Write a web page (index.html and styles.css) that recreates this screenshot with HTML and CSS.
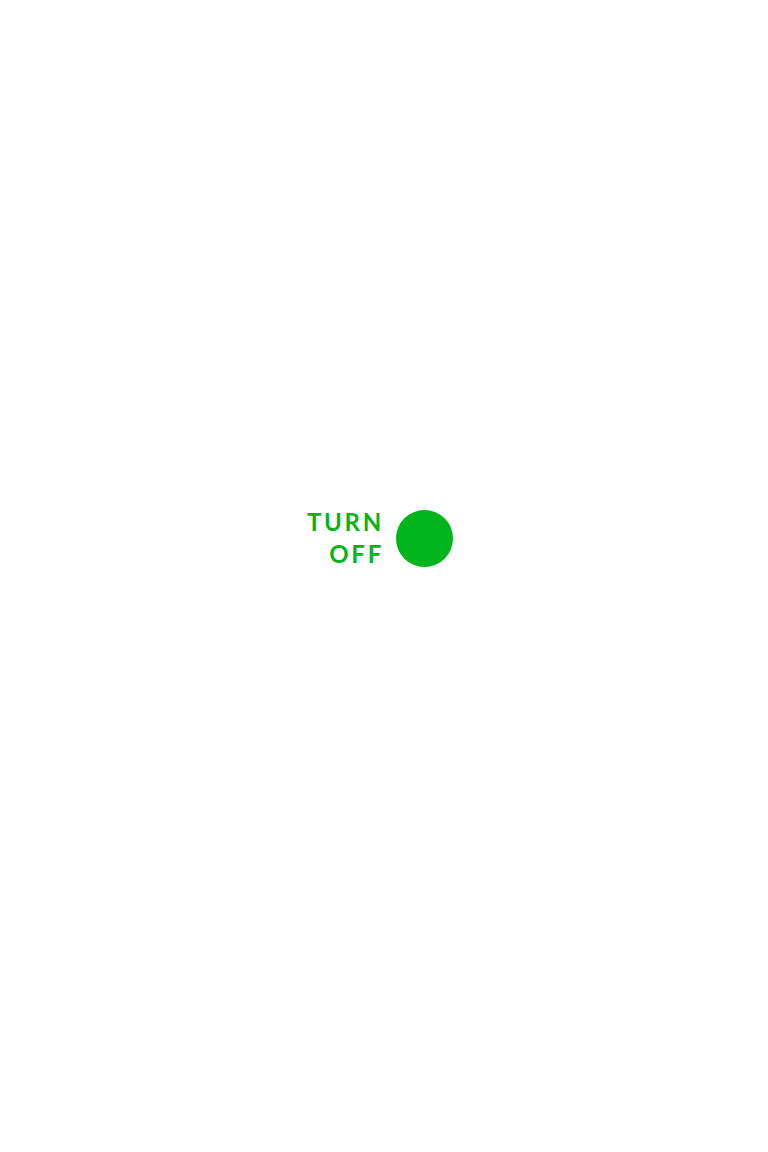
FILE: index.html
```html
<!DOCTYPE html>
<html>
<head>
<meta charset="utf-8">
<link rel="stylesheet" href="styles.css">
</head>
<body>
<div class="page">
  <button class="toggle">
    <span class="label">TURN<br>OFF</span>
    <span class="dot"></span>
  </button>
</div>
</body>
</html>
```
FILE: styles.css
```css
html, body {
  margin: 0;
  padding: 0;
  background: #ffffff;
}
.page {
  width: 768px;
  height: 1152px;
  box-sizing: border-box;
  padding-top: 506px;
  padding-left: 307px;
}
.toggle {
  display: flex;
  align-items: center;
  gap: 12px;
  background: none;
  border: none;
  padding: 0;
  margin: 0;
  cursor: pointer;
}
.label {
  font-family: Lato, "Open Sans", sans-serif;
  font-weight: 700;
  font-size: 24px;
  line-height: 32px;
  color: #00b51c;
  text-align: right;
  letter-spacing: 2.7px;
}
.dot {
  width: 57px;
  height: 57px;
  border-radius: 50%;
  background: #00b51c;
}
```
